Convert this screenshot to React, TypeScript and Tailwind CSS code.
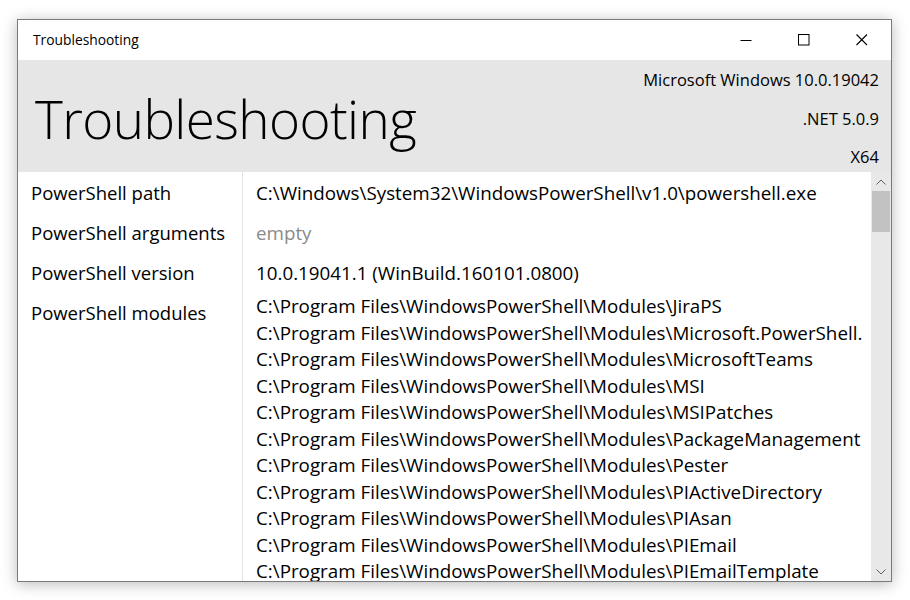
import React from "react";

const modules = [
  "JiraPS",
  "Microsoft.PowerShell.Operation.Validation",
  "MicrosoftTeams",
  "MSI",
  "MSIPatches",
  "PackageManagement",
  "Pester",
  "PIActiveDirectory",
  "PIAsan",
  "PIEmail",
  "PIEmailTemplate",
  "PIExchange",
];

export default function App() {
  const font = { fontFamily: '"Open Sans", "Noto Sans", sans-serif' };
  return (
    <div className="w-[910px] h-[600px] bg-white pt-[19px] pl-[17px]" style={font}>
      <div className="w-[875px] h-[563px] border border-[#7a7a7a] bg-white flex flex-col shadow-[0_2px_14px_rgba(0,0,0,0.28)] overflow-hidden">
        {/* Title bar */}
        <div className="h-[40px] flex items-center shrink-0">
          <div className="pl-[15px] flex-1 text-[13.8px] text-black leading-none">Troubleshooting</div>
          <div className="flex h-full">
            <div className="w-[58px] h-full flex items-center justify-center">
              <svg width="12" height="12" viewBox="0 0 12 12">
                <line x1="0.5" y1="6.5" x2="11.5" y2="6.5" stroke="#000" strokeWidth="1" />
              </svg>
            </div>
            <div className="w-[58px] h-full flex items-center justify-center">
              <svg width="12" height="12" viewBox="0 0 12 12">
                <rect x="0.5" y="0.5" width="10.5" height="10.5" fill="none" stroke="#000" strokeWidth="1" />
              </svg>
            </div>
            <div className="w-[58px] h-full flex items-center justify-center">
              <svg width="12" height="12" viewBox="0 0 12 12">
                <path d="M0.5 0.5 L11 11 M11 0.5 L0.5 11" stroke="#000" strokeWidth="1.1" fill="none" />
              </svg>
            </div>
          </div>
        </div>
        {/* Header */}
        <div className="h-[112px] bg-[#e6e6e6] flex justify-between shrink-0">
          <div className="pl-[17px] flex items-center">
            <span className="text-[53px] font-light text-black leading-none tracking-[-0.6px] mt-[4px]">Troubleshooting</span>
          </div>
          <div className="pr-[12px] pt-[7px] flex flex-col items-end gap-[12.5px] text-[16.5px] leading-[26px] text-black">
            <div>Microsoft Windows 10.0.19042</div>
            <div>.NET 5.0.9</div>
            <div>X64</div>
          </div>
        </div>
        {/* Content */}
        <div className="flex-1 flex min-h-0">
          <div className="w-[225px] shrink-0 border-r border-[#e3e3e3] pt-[1px] pl-[13px] text-[18.5px] text-black">
            <div className="h-[40px] flex items-center">PowerShell path</div>
            <div className="h-[40px] flex items-center">PowerShell arguments</div>
            <div className="h-[40px] flex items-center">PowerShell version</div>
            <div className="h-[40px] flex items-center">PowerShell modules</div>
          </div>
          <div className="flex-1 min-w-0 pt-[1px] pl-[13px] pr-[9px] overflow-hidden">
            <div className="overflow-hidden text-[18.8px] text-black">
              <div className="h-[40px] flex items-center whitespace-nowrap">C:\Windows\System32\WindowsPowerShell\v1.0\powershell.exe</div>
              <div className="h-[40px] flex items-center text-[#8a8a8a]">empty</div>
              <div className="h-[40px] flex items-center whitespace-nowrap">10.0.19041.1 (WinBuild.160101.0800)</div>
              <div>
                {modules.map((m) => (
                  <div key={m} className="leading-[26.5px] whitespace-nowrap">
                    C:\Program Files\WindowsPowerShell\Modules\{m}
                  </div>
                ))}
              </div>
            </div>
          </div>
          {/* Scrollbar */}
          <div className="w-[20px] shrink-0 bg-[#e8e8e8] flex flex-col">
            <div className="h-[19px] flex items-center justify-center">
              <svg width="10" height="6" viewBox="0 0 10 6">
                <path d="M0.5 5.5 L5 1 L9.5 5.5" stroke="#606060" strokeWidth="1" fill="none" />
              </svg>
            </div>
            <div className="h-[41px] mx-[1px] bg-[#c2c2c2]" />
            <div className="flex-1" />
            <div className="h-[19px] flex items-center justify-center">
              <svg width="10" height="6" viewBox="0 0 10 6">
                <path d="M0.5 0.5 L5 5 L9.5 0.5" stroke="#606060" strokeWidth="1" fill="none" />
              </svg>
            </div>
          </div>
        </div>
      </div>
    </div>
  );
}
